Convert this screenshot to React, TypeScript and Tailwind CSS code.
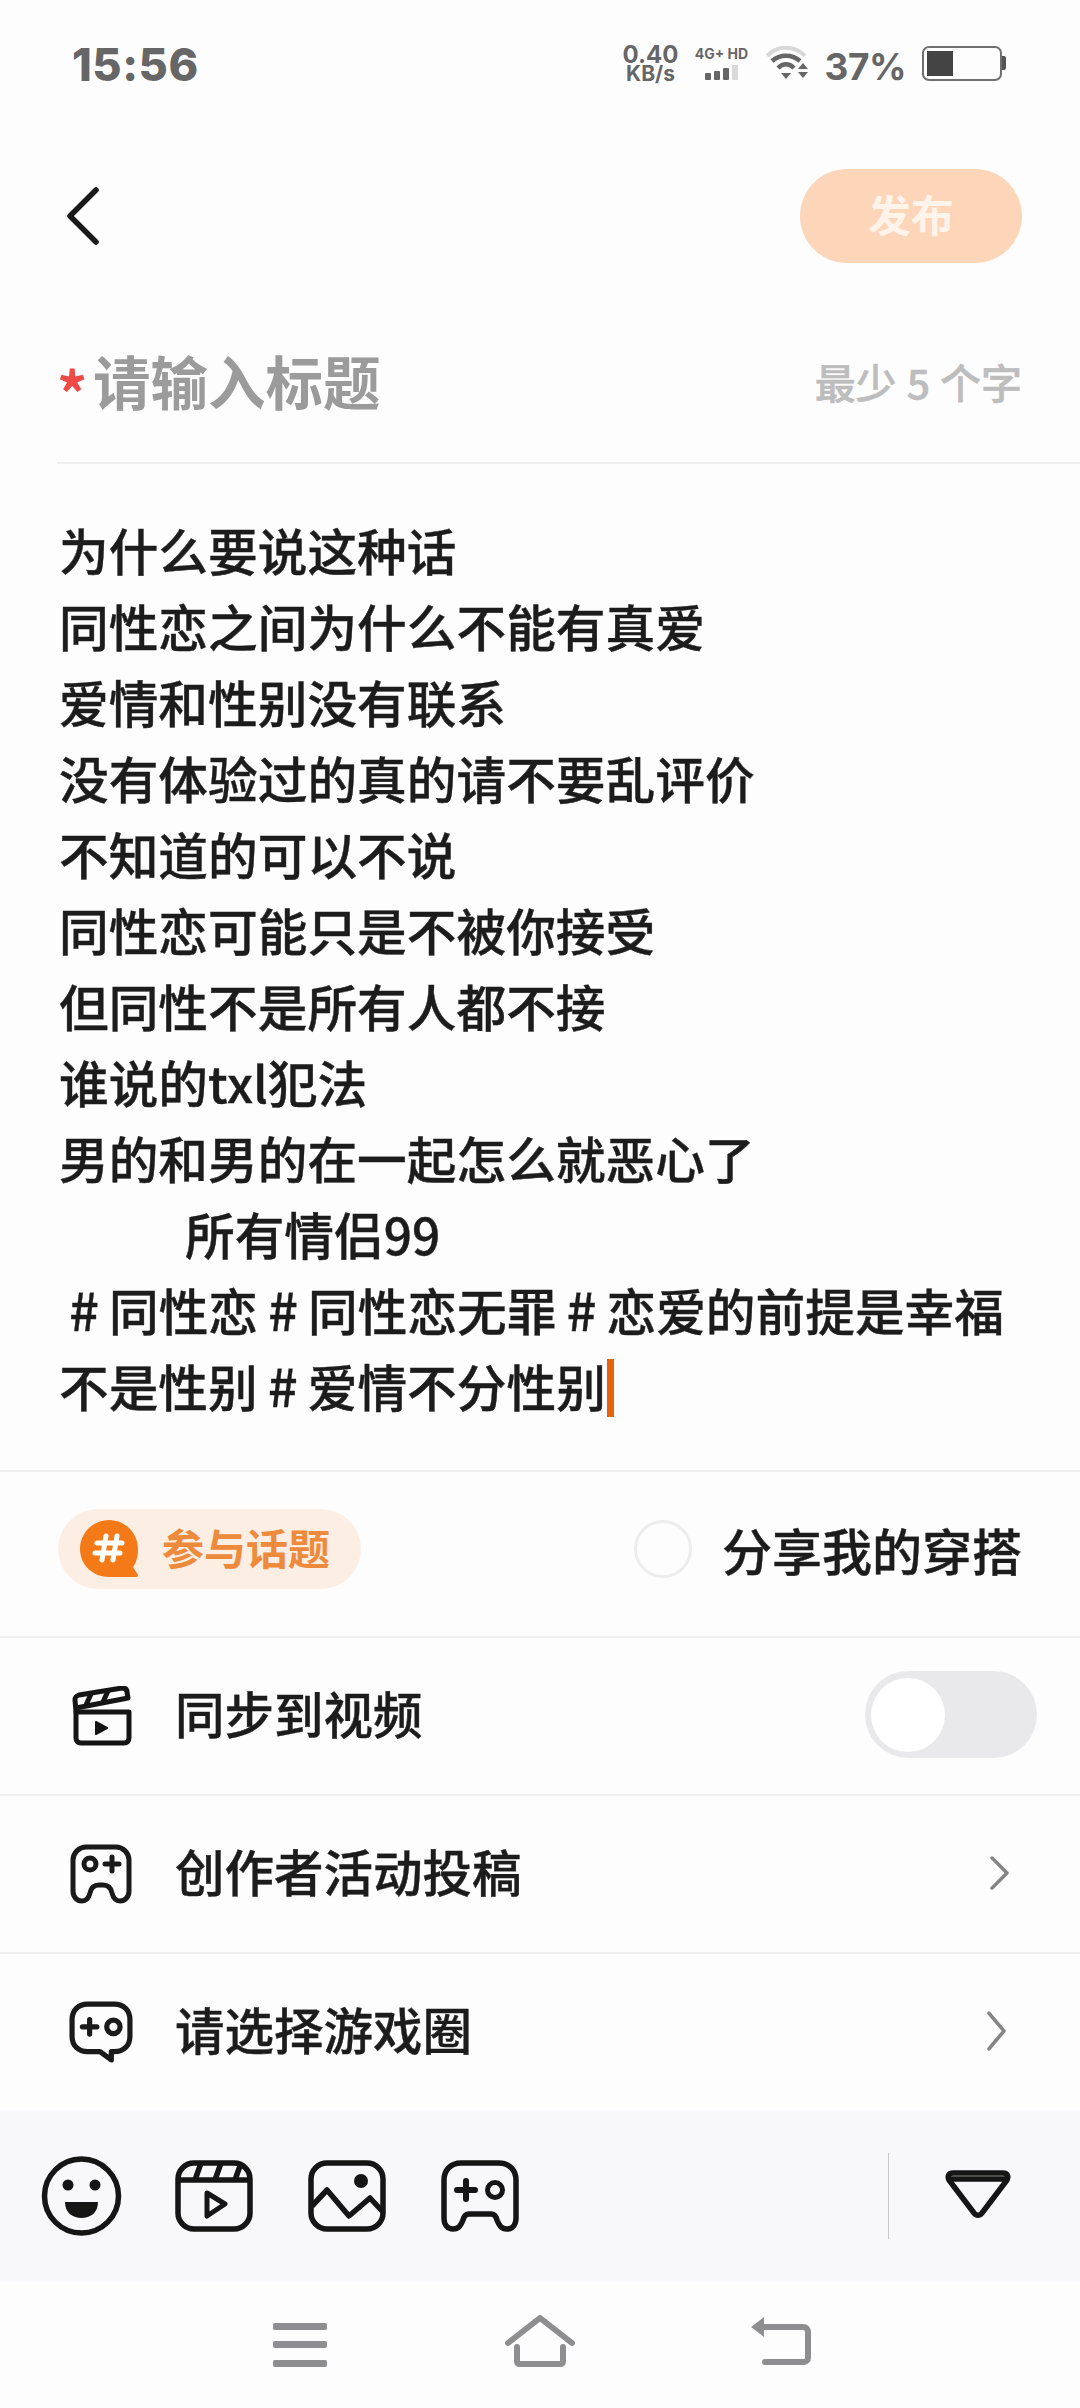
import React from "react";

const FONT = { fontFamily: '"Noto Sans CJK SC", "Noto Sans", sans-serif' };

function StatusBar() {
  return (
    <div className="flex h-[126px] items-center pl-[72px] pr-[74px] text-[#666666]">
      <span className="mt-[2px] text-[45px] leading-none font-extrabold tracking-[0.5px] font-['Inter',sans-serif]">15:56</span>
      <div className="ml-auto flex items-center">
        <div className="flex w-[62px] flex-col items-center font-['Inter',sans-serif] font-bold leading-none">
          <span className="text-[24px] leading-[21px]">0.40</span>
          <span className="text-[21px] leading-[18px]">KB/s</span>
        </div>
        <div className="ml-[10px] flex w-[60px] flex-col items-center font-['Inter',sans-serif] font-bold">
          <span className="text-[14px] leading-[16px] whitespace-nowrap">4G+ HD</span>
          <div className="mt-[3px] flex h-[15px] items-end gap-[3px]">
            <span className="h-[7px] w-[6px] rounded-[1px] bg-[#666666]" />
            <span className="h-[9px] w-[6px] rounded-[1px] bg-[#666666]" />
            <span className="h-[12px] w-[6px] rounded-[1px] bg-[#666666]" />
            <span className="h-[15px] w-[6px] rounded-[1px] bg-[#d9d9d9]" />
          </div>
        </div>
        <svg className="ml-[14px]" width="44" height="34" viewBox="0 0 44 34" fill="none">
          <path d="M1 10 C11 -1 29 -1 39 10" stroke="#d8d8d8" strokeWidth="4" />
          <path d="M6 15 C14 8 26 8 34 15" stroke="#666" strokeWidth="4.5" />
          <path d="M12 22 C17 17 23 17 28 22" stroke="#666" strokeWidth="4.5" />
          <path d="M15 27 H25 L20 33 Z" fill="#666" />
          <path d="M37 17 L42 23 H32 Z M32 26 H42 L37 32 Z" fill="#666" />
        </svg>
        <span className="mt-[6px] ml-[15px] text-[37px] leading-none font-bold font-['Inter',sans-serif] tracking-[-0.5px]">37%</span>
        <div className="ml-[16px] flex items-center">
          <div className="flex h-[35px] w-[80px] items-center rounded-[7px] border-[2px] border-[#707070] p-[3px]">
            <div className="h-full w-[26px] bg-[#444444]" />
          </div>
          <div className="h-[14px] w-[4px] rounded-r-[2px] bg-[#555555]" />
        </div>
      </div>
    </div>
  );
}

function Header() {
  return (
    <div className="flex h-[180px] items-center justify-between pl-[64px] pr-[58px]">
      <svg width="36" height="60" viewBox="0 0 36 60" fill="none">
        <path d="M32 4 L6 30 L32 56" stroke="#1a1a1a" strokeWidth="5.5" strokeLinecap="round" strokeLinejoin="round" />
      </svg>
      <div className="flex h-[94px] w-[222px] items-center justify-center rounded-[47px] bg-[#fdd5b9] pb-[5px] text-[43px] font-bold text-[#fff3ea]">
        发布
      </div>
    </div>
  );
}

function TitleRow() {
  return (
    <div className="ml-[57px] flex h-[158px] items-center justify-between border-b-[2px] border-[#f1f0f1] pr-[58px] pb-[6px]">
      <div className="flex items-center">
        <span className="mt-[20px] w-[36px] text-[60px] leading-none font-bold text-[#ef4a45]">*</span>
        <span className="text-[57.5px] leading-none font-bold text-[#9b9b9b]">请输入标题</span>
      </div>
      <span className="flex items-center gap-[10px] text-[41px] leading-none font-medium text-[#bdbdbd] [-webkit-text-stroke:0.6px_#bdbdbd]">
        <span>最少</span>
        <span>5</span>
        <span>个字</span>
      </span>
    </div>
  );
}

const LINES = [
  "为什么要说这种话",
  "同性恋之间为什么不能有真爱",
  "爱情和性别没有联系",
  "没有体验过的真的请不要乱评价",
  "不知道的可以不说",
  "同性恋可能只是不被你接受",
  "但同性不是所有人都不接",
  "谁说的txl犯法",
  "男的和男的在一起怎么就恶心了",
];

function Hash() {
  return <span className="mx-[8px] inline-block w-[34px] text-center text-[52px]">#</span>;
}

function Body() {
  return (
    <div className="h-[1006px] pt-[47px] pl-[59px] text-[49.7px] leading-[76px] font-medium text-[#1c1c1c] [-webkit-text-stroke:0.4px_#1c1c1c]">
      {LINES.map((l) => (
        <div key={l} className="whitespace-nowrap">{l}</div>
      ))}
      <div className="pl-[126px] whitespace-nowrap">所有情侣99</div>
      <div className="whitespace-nowrap">
        <Hash />同性恋<Hash />同性恋无罪<Hash />恋爱的前提是幸福
      </div>
      <div className="flex items-center whitespace-nowrap">
        <span>不是性别</span>
        <Hash />
        <span>爱情不分性别</span>
        <span className="mt-[6px] ml-[1px] h-[58px] w-[7px] bg-[#e8640c]" />
      </div>
    </div>
  );
}

function Divider() {
  return <div className="h-[2px] bg-[#f1f0f1]" />;
}

function TopicRow() {
  return (
    <div className="flex h-[164px] items-center justify-between pr-[58px] pb-[10px] pl-[58px]">
      <div className="flex h-[80px] w-[303px] items-center rounded-[40px] bg-[#fdeee4] pl-[21px]">
        <svg width="60" height="60" viewBox="0 0 60 60">
          <path d="M30 1 C46 1 59 14 59 30 C59 38 57 44 54 48 L59 56 C59 58 58 58 56 58 H30 C14 58 1 46 1 30 C1 14 14 1 30 1 Z" fill="#f47a17" />
          <path d="M27 17 L23 41 M38 17 L34 41 M18 24 H43 M16 34 H41" stroke="#fff" strokeWidth="5" strokeLinecap="round" />
        </svg>
        <span className="ml-[23px] pb-[4px] text-[42px] leading-none font-bold text-[#ee8a3c]">参与话题</span>
      </div>
      <div className="flex items-center">
        <div className="h-[58px] w-[58px] rounded-full border-[3px] border-[#eeedee]" />
        <span className="ml-[30px] text-[50px] leading-none font-medium text-[#1c1c1c] [-webkit-text-stroke:0.4px_#1c1c1c]">分享我的穿搭</span>
      </div>
    </div>
  );
}

function ClapIcon() {
  return (
    <svg className="ml-[4px]" width="60" height="60" viewBox="0 0 60 60" fill="none" stroke="#151515" strokeWidth="5" strokeLinejoin="round" strokeLinecap="round">
      <path d="M4 26 V52 C4 55 6 57 9 57 H52 C55 57 57 55 57 52 V26 Z" />
      <path d="M4 26 L3 14 C3 11 4 10 7 9 L50 2 C54 2 55 4 55 6 L56 12 L4 22" />
      <path d="M19 8 L14 19 M36 5 L31 16" />
      <path d="M24 36 L35 42 L24 48 Z" fill="#151515" strokeWidth="2" />
    </svg>
  );
}

function PadIcon() {
  return (
    <svg width="66" height="60" viewBox="0 0 62 60" fill="none" stroke="#1a1a1a" strokeWidth="5" strokeLinejoin="round" strokeLinecap="round">
      <path d="M16 3 H46 C53 3 59 9 59 16 V47 C59 53 55 57 50 57 C45 57 43 53 42 49 C41 44 38 41 33 41 H29 C24 41 21 44 20 49 C19 53 17 57 12 57 C7 57 3 53 3 47 V16 C3 9 9 3 16 3 Z" />
      <circle cx="20" cy="20" r="6" />
      <path d="M42 13 V27 M35 20 H49" />
    </svg>
  );
}

function BubbleIcon() {
  return (
    <svg width="66" height="62" viewBox="0 0 62 60" fill="none" stroke="#1a1a1a" strokeWidth="5" strokeLinejoin="round" strokeLinecap="round">
      <path d="M18 3 H44 C53 3 59 9 59 18 V34 C59 43 53 49 44 49 H41 L41 57 L30 49 H18 C9 49 3 43 3 34 V18 C3 9 9 3 18 3 Z" />
      <path d="M20 18 V32 M13 25 H27" />
      <circle cx="43" cy="25" r="6.5" />
    </svg>
  );
}

function Chevron({ h }: { h: number }) {
  return (
    <svg width="22" height={h} viewBox="0 0 22 36" fill="none" preserveAspectRatio="none">
      <path d="M3 2 L18 18 L3 34" stroke="#858585" strokeWidth="3.5" strokeLinecap="round" strokeLinejoin="round" />
    </svg>
  );
}

function ListRow({ icon, label, right }: { icon: React.ReactNode; label: string; right: React.ReactNode }) {
  return (
    <div className="flex h-[156px] items-center pl-[68px]">
      <div className="flex w-[107px] items-center">{icon}</div>
      <span className="pb-[6px] text-[49.5px] leading-none font-medium text-[#1c1c1c] [-webkit-text-stroke:0.4px_#1c1c1c]">{label}</span>
      <div className="ml-auto">{right}</div>
    </div>
  );
}

function Toolbar() {
  return (
    <div className="flex h-[172px] items-center bg-[#f8f7f9] pl-[41px]">
      <svg width="81" height="80" viewBox="0 0 81 80" fill="none">
        <circle cx="40.5" cy="40" r="37" stroke="#151515" strokeWidth="5.5" />
        <circle cx="27" cy="29" r="5.5" fill="#151515" />
        <circle cx="54" cy="29" r="5.5" fill="#151515" />
        <path d="M24 46 H57 C57 57 49 62 40.5 62 C32 62 24 57 24 46 Z" fill="#151515" />
      </svg>
      <svg className="ml-[53px]" width="78" height="72" viewBox="0 0 78 72" fill="none" stroke="#151515" strokeWidth="5.5" strokeLinejoin="round">
        <rect x="3" y="3" width="72" height="66" rx="16" />
        <path d="M3 20 H75" />
        <path d="M26 3 L20 20 M46 3 L40 20 M66 3 L60 20" />
        <path d="M32 33 L50 44 L32 56 Z" strokeWidth="5" />
      </svg>
      <svg className="ml-[55px]" width="78" height="72" viewBox="0 0 78 72" fill="none" stroke="#151515" strokeWidth="5.5" strokeLinejoin="round">
        <rect x="3" y="3" width="72" height="66" rx="16" />
        <circle cx="53" cy="21" r="7" fill="#151515" stroke="none" />
        <path d="M4 46 L19 30 L41 56 L62 38 L75 52" />
      </svg>
      <svg className="ml-[55px]" width="78" height="72" viewBox="0 0 78 72" fill="none" stroke="#151515" strokeWidth="5.5" strokeLinejoin="round" strokeLinecap="round">
        <path d="M20 3 H58 C68 3 75 10 75 20 V58 C75 65 71 69 66 69 C60 69 58 65 56 60 C55 56 53 54 50 54 H28 C25 54 23 56 22 60 C20 65 18 69 12 69 C7 69 3 65 3 58 V20 C3 10 10 3 20 3 Z" />
        <path d="M25 21 V39 M16 30 H34" strokeWidth="6" />
        <circle cx="54" cy="30" r="7.5" strokeWidth="5" />
      </svg>
      <div className="ml-[369px] h-[86px] w-[1px] bg-[#c8c8c8]" />
      <svg className="mb-[4px] ml-[56px]" width="66" height="48" viewBox="0 0 66 48" fill="none" stroke="#151515" strokeWidth="5.5" strokeLinejoin="round">
        <path d="M8 3 H58 C62 3 64 6 62 10 L37 43 C35 46 31 46 29 43 L4 10 C2 6 4 3 8 3 Z" />
        <path d="M5 9 H61" />
      </svg>
    </div>
  );
}

function NavBar() {
  return (
    <div className="flex h-[126px] items-start pt-[33px] pl-[273px]">
      <svg className="mt-[8px]" width="54" height="44" viewBox="0 0 54 44">
        <rect x="0" y="0" width="54" height="7" rx="2" fill="#8e8d90" />
        <rect x="0" y="18" width="54" height="7" rx="2" fill="#8e8d90" />
        <rect x="0" y="37" width="54" height="7" rx="2" fill="#8e8d90" />
      </svg>
      <svg className="ml-[178px]" width="70" height="52" viewBox="0 0 70 52" fill="none" stroke="#8e8d90" strokeWidth="6" strokeLinecap="round" strokeLinejoin="round">
        <path d="M3 28 L35 3 L67 28" />
        <path d="M12 32 V46 C12 48 13 49 15 49 H55 C57 49 58 48 58 46 V32" />
      </svg>
      <svg className="ml-[176px]" width="60" height="50" viewBox="0 0 60 50" fill="none">
        <path d="M0 12 L13 2 V22 Z" fill="#8e8d90" />
        <path d="M10 12 H52 C55 12 57 14 57 17 V43 C57 45 55 47 53 47 H14" stroke="#8e8d90" strokeWidth="6" strokeLinecap="round" strokeLinejoin="round" />
      </svg>
    </div>
  );
}

export default function App() {
  return (
    <div className="flex h-[2408px] w-[1080px] flex-col overflow-hidden bg-[#fefdfe]" style={FONT}>
      <StatusBar />
      <Header />
      <TitleRow />
      <Body />
      <Divider />
      <TopicRow />
      <Divider />
      <ListRow
        icon={<ClapIcon />}
        label="同步到视频"
        right={
          <div className="mr-[43px] mb-[3px] flex h-[87px] w-[172px] items-center rounded-[44px] bg-[#e9e8ea] pl-[6px]">
            <div className="h-[74px] w-[74px] rounded-full bg-white" />
          </div>
        }
      />
      <Divider />
      <ListRow icon={<PadIcon />} label="创作者活动投稿" right={<div className="mr-[69px] mb-[3px]"><Chevron h={34} /></div>} />
      <Divider />
      <ListRow icon={<BubbleIcon />} label="请选择游戏圈" right={<div className="mr-[72px] mb-[3px]"><Chevron h={40} /></div>} />
      <Toolbar />
      <NavBar />
    </div>
  );
}
